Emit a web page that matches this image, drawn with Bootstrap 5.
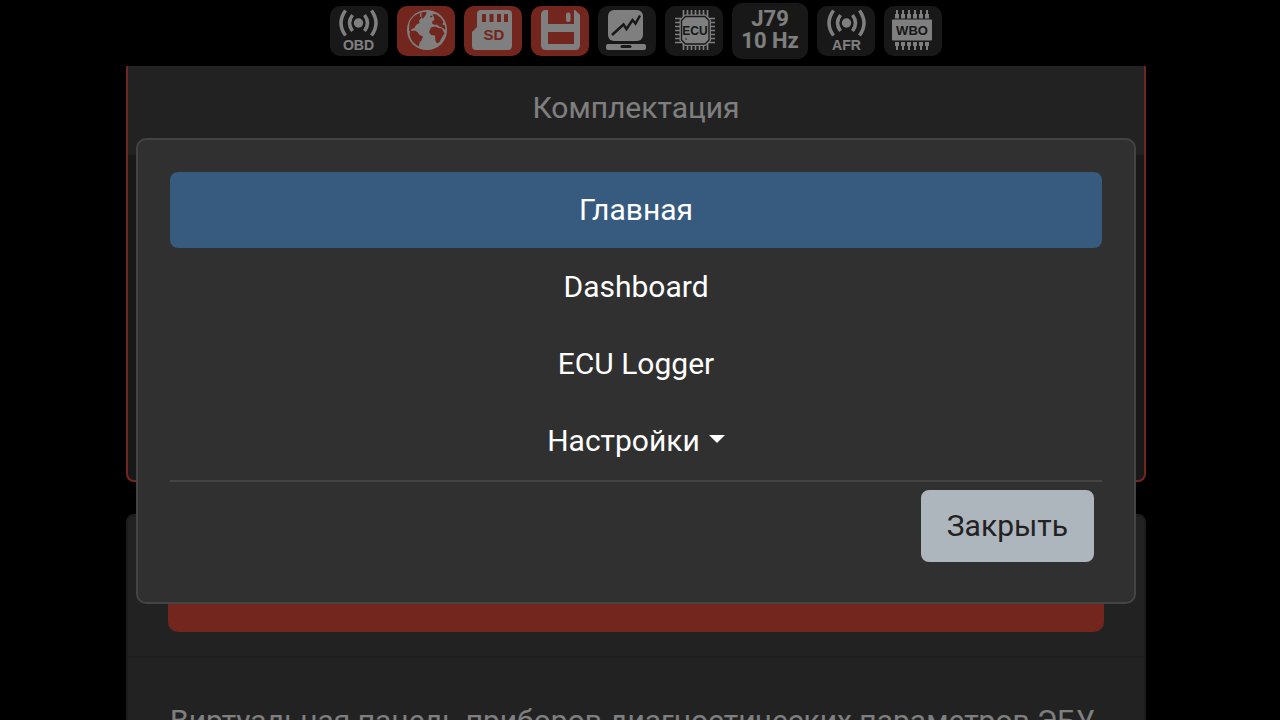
<!DOCTYPE html>
<html lang="ru" data-bs-theme="dark">
<head>
<meta charset="utf-8">
<meta name="viewport" content="width=device-width, initial-scale=1">
<title>ECU Logger</title>
<link href="https://cdn.jsdelivr.net/npm/bootstrap@5.3.0/dist/css/bootstrap.min.css" rel="stylesheet">
<style>
  body { background: #000; color: #fff; font-family: Roboto, "Noto Sans", sans-serif; font-size: 30px; line-height: 45px; }
  .status-bar { background: #000; height: 66px; gap: 9px; padding: 0 8px 4px 0; }
  .status-btn { width: 58px; height: 50px; border: 0; border-radius: 10px; background: #303030; padding: 0; color: #fff; flex: none; }
  .status-btn.alarm { background: #e74c3c; }
  .status-btn svg { display: block; width: 58px; height: 50px; }
  .status-btn.rate { width: 76px; height: 56px; font-size: 22px; font-weight: 700; line-height: 22px; padding-bottom: 2px; }
  svg text { font-family: "Liberation Sans", Arial, sans-serif; font-weight: 700; text-anchor: middle; }
  .page { padding: 58px 8px 0 0; }
  .page-column { max-width: 1020px; }
  .panel { border: 2px solid #3b3b3b; border-radius: 8px; background: #303030; margin-bottom: 32px; overflow: hidden; }
  .panel.alarm { border-color: #e74c3c; }
  .panel-head { background: #444; padding: 24px 40px; text-align: center; border-bottom: 2px solid #3b3b3b; }
  .panel.alarm .panel-head { border-bottom: 0; padding: 25px 40px; }
  .panel h2 { font-size: 30px; line-height: 45px; font-weight: 400; margin: 0; }
  .panel-fill { min-height: 325px; }
  .notice { background: #e74c3c; min-height: 92px; border-radius: 10px; }
  .panel-text { background: #444; padding: 40px 42px; }
  .modal { padding-right: 8px; }
  .modal-dialog { max-width: 1000px; margin: 138px auto 0; }
  .modal-content { background: #303030; border: 2px solid #444; border-radius: 10px; padding: 32px; }
  .menu { gap: 1px; padding-bottom: 1px; }
  .menu .nav-link { color: #fff; padding: 16px; line-height: 44px; border-radius: 8px; text-align: center; }
  .menu .nav-link.active { background: #375a7f; }
  .menu .dropdown-toggle::after { border-width: 8px 8px 0; margin-left: 9px; vertical-align: 8px; }
  .modal-footer { border-top: 2px solid #444; padding: 0; }
  .btn-close-menu { background: #adb5bd; color: #222; font-size: 30px; line-height: 44px; padding: 12px 24px; border: 2px solid #adb5bd; border-radius: 8px; margin: 8px; }
</style>
</head>
<body class="modal-open overflow-hidden">

<header class="status-bar fixed-top d-flex justify-content-center align-items-center">
  <button class="status-btn" type="button" aria-label="OBD">
    <svg viewBox="0 0 58 50" fill="none" stroke="#fff" stroke-width="3.500">
      <circle cx="28.500" cy="17" r="4.700" fill="#fff" stroke="none"/>
      <path d="M34.500 9q6 8 0 16M22.500 9q-6 8 0 16M41.500 4.500q9 12.500 0 25M15.500 4.500q-9 12.500 0 25"/>
      <text x="28.500" y="44" font-size="14" fill="#fff" stroke="none">OBD</text>
    </svg>
  </button>
  <button class="status-btn alarm" type="button" aria-label="Сеть">
    <svg viewBox="0 0 58 50">
      <circle cx="30" cy="24" r="20" fill="#fff"/>
      <g fill="#e74c3c">
        <path d="M12.500 17q2.500-7 9-9.500l2-.5-.5 3.500 2 1-3 3 .5 2.500-3.500 2-1.500 3-3 1-.5 2.500 3.500 1.500-3 .5-2.500-3z"/>
        <path d="M14 25l4-.5 3 2 1 2 4 2-1.500 4-2 2-.5 4q-5.500-2.500-8-7.500-1.500-3-1.500-6z"/>
        <path d="M24.500 6.500q2-.8 5-.7l-.5 3-3 4-1.500-2zM33 10l2-.5.5 1.500-2 .5z"/>
        <path d="M35.500 8l4 .5q4.500 2.500 7 7.500l-1 2.500 2.500 1 .5 4.500-3.500-2.500-3-1-2-2-2 .5-3-1.500.5-2.500 2-1-.5-2.500z"/>
        <path d="M34 21.500l4-1 3.500 1.500 3.500.5 2.500 5-3 4.500-1.500 3.500-2.500 2-2-2-.5-6-4-.5-2-3z"/>
      </g>
    </svg>
  </button>
  <button class="status-btn alarm" type="button" aria-label="SD">
    <svg viewBox="0 0 58 50">
      <path fill="#fff" d="M17 4h27q4 0 4 4v32q0 4-4 4H12q-4 0-4-4V26l5-5V8q0-4 4-4z"/>
      <path fill="#e74c3c" d="M18 8h4v8h-4zM25.500 8h4v8h-4zM33 8h4v8h-4zM40 8h4v8h-4z"/>
      <text x="30" y="34" font-size="15" fill="#e74c3c">SD</text>
    </svg>
  </button>
  <button class="status-btn alarm" type="button" aria-label="Сохранить">
    <svg viewBox="0 0 58 50">
      <path fill="#fff" d="M15 4h29l5 5v30q0 5-5 5H15q-5 0-5-5V9q0-5 5-5z"/>
      <path fill="#e74c3c" d="M17 4h26v14H17zM17 26h26v12H17z"/>
      <rect x="35" y="6.500" width="4.500" height="9.500" rx="2" fill="#fff"/>
    </svg>
  </button>
  <button class="status-btn" type="button" aria-label="График">
    <svg viewBox="0 0 58 50">
      <rect x="10" y="4" width="35" height="31" rx="6" fill="#fff"/>
      <path d="M14 29l11.500-10.500 3 4.500 6-9 3 3.500 4.500-8" fill="none" stroke="#303030" stroke-width="2.500"/>
      <rect x="8" y="38" width="40" height="6" rx="2" fill="#fff"/>
      <rect x="22.500" y="39" width="11" height="3" rx="1.500" fill="#303030"/>
    </svg>
  </button>
  <button class="status-btn" type="button" aria-label="ECU">
    <svg viewBox="0 0 58 50">
      <path stroke="#fff" stroke-width="1.700" d="M18.500 4v40M22.500 4v40M26.500 4v40M30.500 4v40M34.500 4v40M38.500 4v40M42.500 4v40M10 12.500h40M10 16.500h40M10 20.500h40M10 24.500h40M10 28.500h40M10 32.500h40M10 36.500h40"/>
      <path fill="#fff" d="M20 8.500h20.500l5.500 5.500v20.500l-5.500 5.500H20l-5.500-5.500V14z"/>
      <path fill="none" stroke="#303030" stroke-width="1.300" d="M20.500 10.500h19.500l4 4v19.500l-4 4H20.500l-4-4V14.500z"/>
      <text x="30" y="29" font-size="12" fill="#303030">ECU</text>
      <circle cx="21" cy="33" r=".8" fill="#303030"/>
    </svg>
  </button>
  <button class="status-btn rate" type="button">J79<br>10 Hz</button>
  <button class="status-btn" type="button" aria-label="AFR">
    <svg viewBox="0 0 58 50" fill="none" stroke="#fff" stroke-width="3.500">
      <circle cx="29.500" cy="17" r="4.700" fill="#fff" stroke="none"/>
      <path d="M35.500 9q6 8 0 16M23.500 9q-6 8 0 16M42.500 4.500q9 12.500 0 25M16.500 4.500q-9 12.500 0 25"/>
      <text x="29.500" y="44" font-size="14" fill="#fff" stroke="none">AFR</text>
    </svg>
  </button>
  <button class="status-btn" type="button" aria-label="WBO">
    <svg viewBox="0 0 58 50">
      <path stroke="#fff" stroke-width="2" d="M13 4v5M19 4v5M25 4v5M31 4v5M37 4v5M43 4v5M13 39v5M19 39v5M25 39v5M31 39v5M37 39v5M43 39v5"/>
      <path stroke="#fff" stroke-width="4" d="M13 8v4.500M19 8v4.500M25 8v4.500M31 8v4.500M37 8v4.500M43 8v4.500M13 36v4M19 36v4M25 36v4M31 36v4M37 36v4M43 36v4"/>
      <rect x="8" y="13.500" width="40" height="21" rx="1" fill="#fff"/>
      <text x="28" y="29" font-size="13" fill="#303030">WBO</text>
    </svg>
  </button>
</header>

<main class="page">
  <div class="page-column mx-auto">
    <section class="panel alarm">
      <div class="panel-head"><h2>Комплектация</h2></div>
      <div class="panel-fill"></div>
    </section>
    <section class="panel">
      <div class="panel-head"><div class="notice"></div></div>
      <div class="panel-text">Виртуальная панель приборов диагностических параметров ЭБУ</div>
    </section>
  </div>
</main>

<div class="modal-backdrop show"></div>
<div class="modal show d-block" tabindex="-1" role="dialog" aria-label="Меню">
  <div class="modal-dialog">
    <div class="modal-content">
      <nav class="menu nav nav-pills flex-column">
        <a class="nav-link active" href="#" aria-current="page">Главная</a>
        <a class="nav-link" href="#">Dashboard</a>
        <a class="nav-link" href="#">ECU Logger</a>
        <a class="nav-link dropdown-toggle" href="#" data-bs-toggle="dropdown">Настройки</a>
      </nav>
      <div class="modal-footer">
        <button class="btn btn-close-menu" type="button">Закрыть</button>
      </div>
    </div>
  </div>
</div>

<script src="https://cdn.jsdelivr.net/npm/bootstrap@5.3.0/dist/js/bootstrap.bundle.min.js"></script>
</body>
</html>
